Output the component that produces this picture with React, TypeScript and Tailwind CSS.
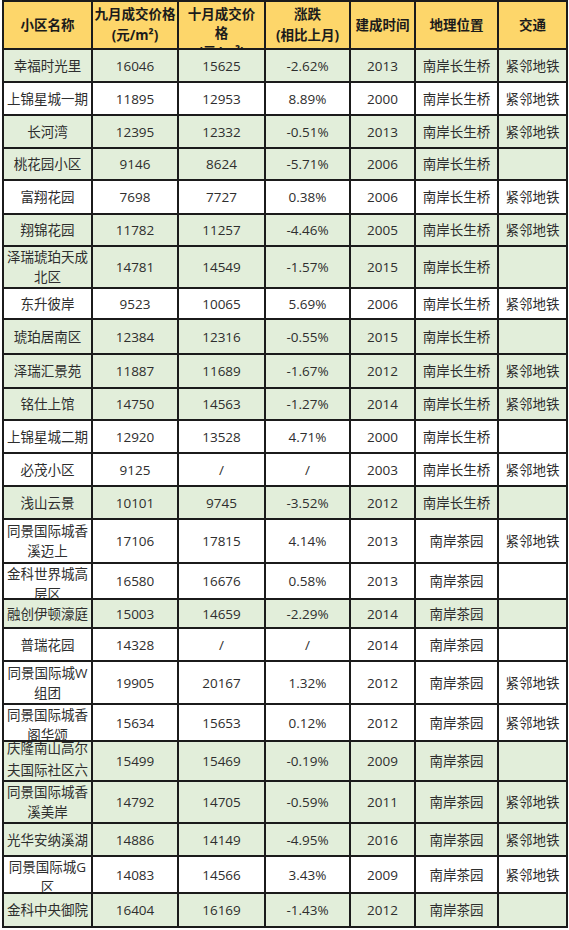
import React from 'react'

type Row = {
  name: string
  sep: string
  oct: string
  change: string
  year: string
  area: string
  metro: string
  green: boolean
  nameCls?: string
}

const rows: Row[] = [
  { name: '幸福时光里', sep: '16046', oct: '15625', change: '-2.62%', year: '2013', area: '南岸长生桥', metro: '紧邻地铁', green: true },
  { name: '上锦星城一期', sep: '11895', oct: '12953', change: '8.89%', year: '2000', area: '南岸长生桥', metro: '紧邻地铁', green: false },
  { name: '长河湾', sep: '12395', oct: '12332', change: '-0.51%', year: '2013', area: '南岸长生桥', metro: '紧邻地铁', green: true },
  { name: '桃花园小区', sep: '9146', oct: '8624', change: '-5.71%', year: '2006', area: '南岸长生桥', metro: '', green: true },
  { name: '富翔花园', sep: '7698', oct: '7727', change: '0.38%', year: '2006', area: '南岸长生桥', metro: '紧邻地铁', green: false },
  { name: '翔锦花园', sep: '11782', oct: '11257', change: '-4.46%', year: '2005', area: '南岸长生桥', metro: '紧邻地铁', green: true },
  { name: '泽瑞琥珀天成北区', sep: '14781', oct: '14549', change: '-1.57%', year: '2015', area: '南岸长生桥', metro: '', green: true },
  { name: '东升彼岸', sep: '9523', oct: '10065', change: '5.69%', year: '2006', area: '南岸长生桥', metro: '紧邻地铁', green: false },
  { name: '琥珀居南区', sep: '12384', oct: '12316', change: '-0.55%', year: '2015', area: '南岸长生桥', metro: '', green: true },
  { name: '泽瑞汇景苑', sep: '11887', oct: '11689', change: '-1.67%', year: '2012', area: '南岸长生桥', metro: '紧邻地铁', green: true },
  { name: '铭仕上馆', sep: '14750', oct: '14563', change: '-1.27%', year: '2014', area: '南岸长生桥', metro: '紧邻地铁', green: true },
  { name: '上锦星城二期', sep: '12920', oct: '13528', change: '4.71%', year: '2000', area: '南岸长生桥', metro: '', green: false },
  { name: '必茂小区', sep: '9125', oct: '/', change: '/', year: '2003', area: '南岸长生桥', metro: '紧邻地铁', green: false },
  { name: '浅山云景', sep: '10101', oct: '9745', change: '-3.52%', year: '2012', area: '南岸长生桥', metro: '', green: true },
  { name: '同景国际城香溪迈上', sep: '17106', oct: '17815', change: '4.14%', year: '2013', area: '南岸茶园', metro: '紧邻地铁', green: false },
  { name: '金科世界城高层区', sep: '16580', oct: '16676', change: '0.58%', year: '2013', area: '南岸茶园', metro: '', green: false },
  { name: '融创伊顿濠庭', sep: '15003', oct: '14659', change: '-2.29%', year: '2014', area: '南岸茶园', metro: '', green: true },
  { name: '普瑞花园', sep: '14328', oct: '/', change: '/', year: '2014', area: '南岸茶园', metro: '', green: false },
  { name: '同景国际城W组团', sep: '19905', oct: '20167', change: '1.32%', year: '2012', area: '南岸茶园', metro: '紧邻地铁', green: false },
  { name: '同景国际城香阁华颂', sep: '15634', oct: '15653', change: '0.12%', year: '2012', area: '南岸茶园', metro: '紧邻地铁', green: false },
  { name: '庆隆南山高尔夫国际社区六期萨湖上', sep: '15499', oct: '15469', change: '-0.19%', year: '2009', area: '南岸茶园', metro: '', green: true, nameCls: '-mt-[5px] leading-[22px]' },
  { name: '同景国际城香溪美岸', sep: '14792', oct: '14705', change: '-0.59%', year: '2011', area: '南岸茶园', metro: '紧邻地铁', green: true },
  { name: '光华安纳溪湖', sep: '14886', oct: '14149', change: '-4.95%', year: '2016', area: '南岸茶园', metro: '紧邻地铁', green: true },
  { name: '同景国际城G区', sep: '14083', oct: '14566', change: '3.43%', year: '2009', area: '南岸茶园', metro: '紧邻地铁', green: false },
  { name: '金科中央御院', sep: '16404', oct: '16169', change: '-1.43%', year: '2012', area: '南岸茶园', metro: '', green: true },
]

function Cell({ green, children, cls }: { green: boolean; children: React.ReactNode; cls?: string }) {
  return (
    <div
      className={`flex flex-col items-center [justify-content:safe_center] overflow-hidden text-center ${
        green ? 'bg-[#e2eeda]' : 'bg-white'
      }`}
    >
      <div className={`w-full break-all ${cls ?? 'leading-[20px]'}`}>{children}</div>
    </div>
  )
}

function Head({ children }: { children: React.ReactNode }) {
  return (
    <div className="flex flex-col items-center [justify-content:safe_center] overflow-hidden bg-[#fdd66a] text-center font-bold text-[#1b1b1b] leading-[21px]">
      <div>{children}</div>
    </div>
  )
}

export default function App() {
  return (
    <main className="min-h-screen bg-white pl-[2px] font-['Open_Sans','Noto_Sans_CJK_SC',sans-serif] text-[13.5px] text-[#2e2e2e]">
      <div className="grid w-[566px] grid-cols-[87px_84px_85px_83px_63px_81px_67px] grid-rows-[46px_31px_31px_31px_30px_32px_30px_40px_29px_33px_32px_30px_31px_31px_31px_42px_34px_27px_31px_41px_35px_38px_40px_31px_35px_32px] gap-[2px] bg-[#1b1b1b] p-[2px]">
        <Head>小区名称</Head>
        <Head>
          九月成交价格
          <br />
          (元/m²)
        </Head>
        <div className="flex flex-col items-center overflow-hidden bg-[#fdd66a] pt-[3px] text-center font-bold text-[#1b1b1b] leading-[19px]">
          <div>
            十月成交价
            <br />
            格
            <br />
            (元/m²)
          </div>
        </div>
        <Head>
          涨跌
          <br />
          (相比上月)
        </Head>
        <Head>建成时间</Head>
        <Head>地理位置</Head>
        <Head>交通</Head>

        {rows.map((r) => (
          <React.Fragment key={r.name}>
            <Cell green={r.green} cls={r.nameCls}>{r.name}</Cell>
            <Cell green={r.green}>{r.sep}</Cell>
            <Cell green={r.green}>{r.oct}</Cell>
            <Cell green={r.green}>{r.change}</Cell>
            <Cell green={r.green}>{r.year}</Cell>
            <Cell green={r.green}>{r.area}</Cell>
            <Cell green={r.green}>{r.metro}</Cell>
          </React.Fragment>
        ))}
      </div>
    </main>
  )
}
